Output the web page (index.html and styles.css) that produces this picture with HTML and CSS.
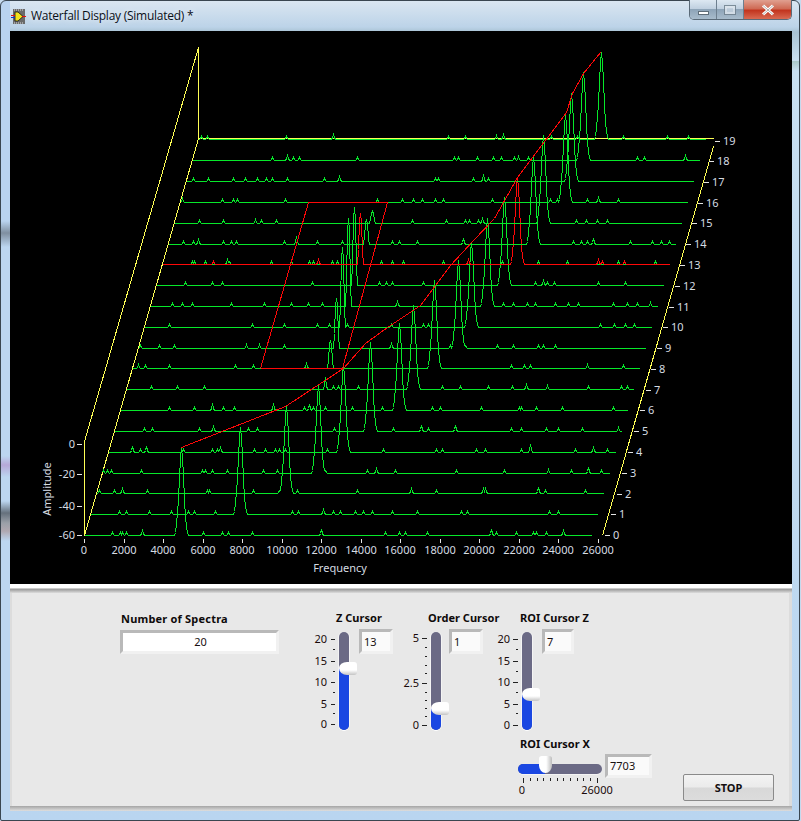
FILE: index.html
```html
<!DOCTYPE html>
<html lang="en">
<head>
<meta charset="utf-8">
<title>Waterfall Display (Simulated) *</title>
<link rel="stylesheet" href="styles.css">
</head>
<body>
<div class="window">
  <header class="titlebar">
    <svg class="app-icon" width="15" height="15" viewBox="0 0 15 15">
      <rect x="2" y="0" width="12" height="15" fill="#6a6a6a"/>
      <path d="M3 1h1M5 1h1M7 1h1M9 1h1M11 1h1M3 14h1M5 14h1M7 14h1M9 14h1M11 14h1" stroke="#ddd" fill="none"/>
      <path d="M4 3h3l5 4.500-5 4.500H4z" fill="#f2e21c" stroke="#111" stroke-width=".8"/>
      <path d="M0 6.500h4M11 7.500h4" stroke="#e01010" fill="none"/>
      <path d="M0 8.500h4" stroke="#1030d0" fill="none"/>
    </svg>
    <span class="title">Waterfall Display (Simulated) *</span>
    <div class="caption-buttons">
      <div class="cap cap-min"><span class="glyph-min"></span></div>
      <div class="cap cap-max"><span class="glyph-max"></span></div>
      <div class="cap cap-close">
        <svg width="16" height="12" viewBox="0 0 16 12"><path d="M3 1.500l10 9M13 1.500l-10 9" stroke="#fff" stroke-width="3" fill="none"/><path d="M3 1.500l10 9M13 1.500l-10 9" stroke="#666" stroke-width=".5" fill="none"/></svg>
      </div>
    </div>
  </header>

  <svg id="plot" class="plot" width="782" height="553" viewBox="10 31 782 553"></svg>

  <div class="panel-frame">
    <section class="panel">
      <div class="ctl ctl-spectra">
        <div class="label label-spectra">Number of Spectra</div>
        <div class="num num-wide">20</div>
      </div>

      <div class="ctl ctl-z">
        <div class="label label-v">Z Cursor</div>
        <div class="vrow">
          <svg class="scale" width="30" height="110">
            <text x="22" y="18">20</text><text x="22" y="40">15</text><text x="22" y="61">10</text><text x="22" y="83">5</text><text x="22" y="103">0</text>
            <path d="M26 14.500h4M26 36.500h4M26 57.500h4M26 79.500h4M26 99.500h4M28 24.500h2M28 46.500h2M28 67.500h2M28 88.500h2"/>
          </svg>
          <div class="track"><div class="fill fill-z"></div><div class="thumb thumb-z"></div></div>
          <div class="num num-z">13</div>
        </div>
      </div>

      <div class="ctl ctl-order">
        <div class="label label-v">Order Cursor</div>
        <div class="vrow">
          <svg class="scale" width="30" height="110">
            <text x="22" y="17">5</text><text x="22" y="62">2.5</text><text x="22" y="104">0</text>
            <path d="M25 13.500h5M25 58.500h5M25 100.500h5M28 22.500h2M28 31.500h2M28 40.500h2M28 48.500h2M28 67.500h2M28 75.500h2M28 83.500h2M28 91.500h2"/>
          </svg>
          <div class="track"><div class="fill fill-order"></div><div class="thumb thumb-order"></div></div>
          <div class="num num-order">1</div>
        </div>
      </div>

      <div class="ctl ctl-roiz">
        <div class="label label-roi">ROI Cursor Z</div>
        <div class="vrow">
          <svg class="scale" width="30" height="110">
            <text x="22" y="18">20</text><text x="22" y="40">15</text><text x="22" y="61">10</text><text x="22" y="83">5</text><text x="22" y="104">0</text>
            <path d="M25 14.500h5M25 36.500h5M25 57.500h5M25 79.500h5M25 100.500h5M28 24.500h2M28 46.500h2M28 67.500h2M28 88.500h2"/>
          </svg>
          <div class="track"><div class="fill fill-roiz"></div><div class="thumb thumb-roiz"></div></div>
          <div class="num num-roiz">7</div>
        </div>
      </div>

      <div class="ctl ctl-roix">
        <div class="label label-x">ROI Cursor X</div>
        <div class="hrow">
          <div class="hcol">
            <div class="htrack"><div class="hfill"></div><div class="hthumb"></div></div>
            <svg class="scale hscale" width="100" height="18">
              <path d="M5.500 0v5M79.500 0v5M12.500 0v3M19.500 0v3M25.500 0v3M32.500 0v3M39.500 0v3M45.500 0v3M52.500 0v3M59.500 0v3M65.500 0v3M72.500 0v3"/>
              <text class="mid" x="4" y="16">0</text><text class="mid" x="79" y="16">26000</text>
            </svg>
          </div>
          <div class="num num-x">7703</div>
        </div>
      </div>

      <button class="stop">STOP</button>
    </section>
  </div>
</div>
<script src="chart.js"></script>
</body>
</html>
```
FILE: styles.css
```css
* { box-sizing: border-box; }
html, body { margin: 0; padding: 0; background: #c5daee; }
body { width: 801px; height: 821px; overflow: hidden; font-family: "Noto Sans", "Liberation Sans", sans-serif; }

.window {
  width: 800px; height: 821px;
  display: flex; flex-direction: column;
  padding: 0 8px 0 9px;
  border: 1px solid #3a4650;
  border-radius: 6px 6px 2px 2px;
  background:
    linear-gradient(#b9d3ef 0, #b9d3ef 220px, #7f8fa0 232px, #bcd6f0 246px, #bcd6f0 455px, #b6a8d8 464px, #bcd6f0 476px, #bcd6f0 500px, #65707c 512px, #9aa0a8 522px, #b0a8b0 530px, #bcd6f0 540px) left top / 9px 100% no-repeat,
    linear-gradient(#dae6f1 0, #bcd3e8 26px, #a9c3d4 31px, #c9dff0 60px, #a9c8c8 58px, #c9e0f2 70px, #b9d5f0 100%);
}

.titlebar { height: 30px; flex: none; display: flex; align-items: flex-start; position: relative; }
.app-icon { margin: 8px 0 0 1px; }
.title {
  margin: 6px 0 0 5px;
  font: 12px/17px "Open Sans", "Noto Sans", sans-serif;
  letter-spacing: -.25px;
  color: #0a0f18;
  text-shadow: 0 0 6px rgba(255,255,255,.9);
}
.caption-buttons {
  position: absolute; right: -1px; top: -1px;
  display: flex; height: 20px;
  border: 1px solid #5a6a78; border-top: 0;
  border-radius: 0 0 5px 5px; overflow: hidden;
}
.cap { height: 100%; display: flex; align-items: center; justify-content: center; }
.cap-min, .cap-max { width: 27px; background: linear-gradient(#dde8f2 0, #c0d0e0 45%, #8ea4b8 50%, #a8bccc 100%); border-right: 1px solid #6d7f8f; }
.cap-close { width: 47px; background: linear-gradient(#e0a090 0, #cf6b55 45%, #c2351f 55%, #d96a52 100%); }
.glyph-min { width: 11px; height: 4px; margin-top: 6px; background: #fff; border: 1px solid #5f6d78; }
.glyph-max { width: 12px; height: 10px; border: 1px solid #6f7f8c; background: #c4d2de; box-shadow: inset 0 0 0 2px #dde6ee; opacity: .85; }

.plot { display: block; flex: none; background: #000; margin-left: 0; }
.plot polyline, .plot path.line { fill: none; shape-rendering: crispEdges; stroke-width: 1; }
.plot .green { stroke: #06e82a; }
.plot .red { stroke: #ff0808; }
.plot .yellow { stroke: #ffff55; }
.plot .tick { stroke: #e4e4e4; fill: none; shape-rendering: crispEdges; }
.plot text { font: 11px "Noto Sans", sans-serif; fill: #d6dce2; }

.panel-frame {
  flex: none; width: 782px; height: 227px;
  background: linear-gradient(#fff 0, #fff 4px, #979797 5px, #dcdcdc 9px);
  padding: 9px 3px 5px 2px;
  position: relative;
}
.panel-frame::after {
  content: ""; position: absolute; left: 0; right: 0; bottom: 0; height: 5px;
  background: linear-gradient(#a5a5a5, #dedede);
}
.panel { position: relative; width: 100%; height: 213px; background: #e8e8e8; }

.ctl { position: absolute; }
.ctl-spectra { left: 109px; top: 19px; }
.ctl-z { left: 293px; top: 18px; }
.ctl-order { left: 385px; top: 18px; }
.ctl-roiz { left: 476px; top: 18px; }
.ctl-roix { left: 506px; top: 144px; }

.label { font: 700 11px/14px "Noto Sans", sans-serif; color: #0e0a0a; white-space: nowrap; letter-spacing: .02px; }
.label-spectra { letter-spacing: .2px; }
.label-v { margin-left: 31px; }
.label-roi { margin-left: 32px; }
.label-x { margin-left: 2px; }

.num {
  border: 3px solid; border-color: #b9b9b9 #f1f1f1 #f1f1f1 #b9b9b9;
  background: #fafafa;
  font: 11px/18px "Noto Sans", sans-serif; color: #181010;
  padding-left: 2px; height: 25px;
  display: flex; align-items: center;
}
.num-wide { width: 159px; height: 24px; margin-top: 4px; margin-left: -1px; background: #fff; justify-content: center; }
.num-z, .num-order, .num-roiz { margin-top: 4px; }
.num-z { width: 34px; margin-left: 10px; }
.num-order { width: 34px; margin-left: 8px; }
.num-roiz { width: 32px; margin-left: 10px; }
.num-x { width: 47px; height: 24px; margin-top: 3px; margin-left: 3px; }

.vrow { display: flex; align-items: flex-start; }
.scale { display: block; overflow: visible; }
.scale text { font: 11px "Noto Sans", sans-serif; fill: #1a0a0a; text-anchor: end; }
.scale text.mid { text-anchor: middle; }
.scale path { stroke: #222; fill: none; shape-rendering: crispEdges; }

.track {
  position: relative; width: 10px; height: 98px; margin: 7px 0 0 4px;
  background: #6b6a85; border-radius: 5px;
  box-shadow: 0 1px 0 #fff, 1px 0 0 #f4f4f4, -1px 0 0 #f4f4f4;
}
.fill { position: absolute; left: 0; right: 0; bottom: 0; background: #1a47e2; border-radius: 0 0 5px 5px; }
.fill-z { height: 62px; }
.fill-order { height: 22px; }
.fill-roiz { height: 36px; }
.thumb {
  position: absolute; left: 0; width: 18px; height: 13px;
  background: linear-gradient(#fff 0, #fff 62%, #c4c4c4 100%);
  border-radius: 8px 3px 3px 8px / 6px 3px 3px 7px;
}
.thumb-z { top: 30px; }
.thumb-order { top: 70px; }
.thumb-roiz { top: 56px; }

.hrow { display: flex; align-items: flex-start; }
.hcol { width: 84px; padding-top: 13px; }
.htrack { position: relative; height: 10px; background: #6b6a85; border-radius: 5px; box-shadow: 0 1px 0 #f4f4f4; }
.hfill { position: absolute; left: 0; top: 0; bottom: 0; width: 27px; background: #1a47e2; border-radius: 5px 0 0 5px; }
.hthumb {
  position: absolute; left: 21px; top: -8px; width: 13px; height: 17px;
  background: linear-gradient(90deg, #fff 0, #fff 55%, #bcbcbc 100%);
  border-radius: 3px 3px 7px 7px / 3px 3px 8px 8px;
}
.hscale { margin-top: 4px; }

.stop {
  position: absolute; left: 671px; top: 181px; width: 91px; height: 27px;
  border: 1px solid #8a8a8a; border-radius: 2px;
  background: linear-gradient(#f3f3f3 0, #ebebeb 48%, #d8d8d8 52%, #dcdcdc 100%);
  font: 700 11px "Noto Sans", sans-serif; color: #141010; padding: 0;
}
```
FILE: chart.js
```js
(function () {
  var base = [535,514,493,473,452,431,410,389,368,348,327,306,285,264,244,223,202,181,160,139];
  // Small peaks per spectrum: "x" or "x:height"; m = main order peak [x, height]; r = ROI peak [x, height]
  var rows = [
    { p: "112 120 122 126 142:5 203 222 228 252 321:6 385 399 405 427 491:6 496 516 533 536 546 563:5", m: [181,88] },
    { p: "119 126 149 171 188 194 215 292 298 323:5 333 340 355 363 372 392 417 461 467 549 558", m: [240,87] },
    { p: "99 114 122:5 147 207 209 253 279 297 357 411:5 436 483:5 485:5 538:6 545 585", m: [286,87] },
    { p: "103 107 111 141 202 205 212 227 263 277 325 367 376:5 395 456 504 548:4 571 588:6 601", m: [318,88] },
    { p: "132:6 140 146:6 183 212 217 220:5 254 265 275 279 285 327 383 436 442 476 485 521 530:8 575 593:5 607", m: [343,87] },
    { p: "144 152 199 213:5 248 257 334 393 421:6 428 455:6 511 521 546 558 582 618:4", m: [370,89] },
    { p: "169 194 212:7 223 234 273:7 304 309:6 313 325 352 382 432 440 481 519 521 536 562 613", m: [399,87] },
    { p: "151 177 204 325:12 333 338 358 442 460 488 512 526:5 547:4 588 621 627", m: [413,84] },
    { p: "138:4 145 169 235 253 306:5 511 524 530 587:4 623", m: [434,88], r: [330,28] },
    { p: "140 159 174 246:4 259:4 284 391:5 450 465 497 513 538 543 555", m: [458,88], r: [336,50] },
    { p: "169 252 284 317 329 347 391 423 428 600 614 625 634", m: [471,85], r: [342,80] },
    { p: "172 182 192 231 264 291 308 322 397:5 503 513 527 535 555 568 578 613 627 637 650:4", m: [487,88], r: [348,88] },
    { p: "185 212 222 312 379 386 392 423 535 543:5 547 554 598 625", m: [504,88], r: [354,78] },
    { p: "192 194 205 227:5 229 271 291 309 313 332 337 381 392 403 443 502 538 567 618 655", red: "213 318:5 468:5 598:5 602 624", m: [517,87], r: [360,51] },
    { p: "183 193 198:5 223 231 236 284 296:8 317 342 392 399 417 463:6 573 581 587 593:6 630 652 661 669", m: [533,88], r: [366,25] },
    { p: "199 223 255:4 261 276 412 446 465 469 478 482:5 576 586 597 607", m: [543,88], r: [372,12] },
    { p: "182:4 222 233 237 285 377 402 413 422 443 492 435 550 557 560 587 598:5 618", m: [565,88] },
    { p: "193 208 233 245 257 266 272 287 324 339:5 435 438 473 483:7 488", m: [571,88] },
    { p: "272 287:5 293 299 357 454 458 477 493 501 514 518:4 528 637 644 685:5", m: [583,88] },
    { p: "201 207:3 286 333:5 448 465 496:4 503:5 551 577 623 667 688", m: [601,87] }
  ];
  var WIDE = [0,.03,.14,.25,.42,.65,.88,1,.88,.68,.4,.2,.1,.03,0];
  var NARROW = [0,.3,.85,1,.85,.25,0];

  function stamp(h, x, height, profile) {
    var c = (profile.length - 1) / 2;
    profile.forEach(function (f, i) {
      var k = x + i - c;
      if (f * height > (h[k] || 0)) h[k] = f * height;
    });
  }
  function small(h, list) {
    (list || "").split(" ").forEach(function (s) {
      if (!s) return;
      var a = s.split(":"), x = +a[0], v = a[1] ? +a[1] : 3;
      stamp(h, x, v, [.35, 1, .35]);
    });
  }
  function trace(i, h, cls) {
    var x0 = 84 + 6 * i, x1 = 591 + 6 * i, pts = [];
    for (var x = x0; x <= x1; x++) {
      pts.push((x + .5) + "," + (base[i] - Math.round(h[x] || 0) + .5));
    }
    return '<polyline class="' + cls + '" points="' + pts.join(" ") + '"/>';
  }
  function line(cls, pts) {
    return '<polyline class="' + cls + '" points="' + pts + '"/>';
  }

  var out = "";
  // yellow frame
  out += line("yellow", "84.5,535.5 84.5,441.5 198.5,47.5 198.5,138.5 713.5,138.5");
  out += line("yellow", "84.5,535.5 198.5,138.5");
  out += line("yellow", "602.5,535.5 713.5,146.5");

  rows.forEach(function (r, i) {
    var h = {};
    small(h, r.p);
    stamp(h, r.m[0], r.m[1], WIDE);
    if (r.r) stamp(h, r.r[0], r.r[1], NARROW);
    if (r.red) {
      out += trace(i, h, "green");
      var rh = {};
      small(rh, r.red);
      stamp(rh, r.m[0], r.m[1], WIDE);
      stamp(rh, r.r[0], r.r[1], NARROW);
      out += trace(i, rh, "red");
    } else {
      out += trace(i, h, "green");
    }
  });

  // ROI box and order cursor
  out += line("red", "260.5,368.5 342.5,368.5 387.5,202.5 308.5,202.5 260.5,368.5");
  out += line("red", "181.5,447.5 285.5,406.5 320.5,383.5 343.5,368.5 365.5,343.5 387.5,327.5 420.5,305.5 435.5,285.5 450.5,265.5 473.5,240.5 494.5,218.5 517.5,177.5 566.5,112.5 572.5,93.5 583.5,73.5 600.5,52.5");

  // axes
  var t = "", txt = "";
  var lab = [535,514,494,473,452,431,410,390,369,348,327,307,286,265,244,223,203,182,161,141];
  lab.forEach(function (y, i) {
    var x = 605 + i * 5.8;
    t += "M" + Math.round(x) + " " + (y + .5) + "h5";
    txt += '<text x="' + Math.round(x + 8) + '" y="' + (y + 4) + '">' + i + "</text>";
  });
  [[0,444],[-20,474],[-40,506],[-60,535]].forEach(function (a) {
    t += "M77 " + (a[1] + .5) + "h5";
    txt += '<text text-anchor="end" x="75" y="' + (a[1] + 4) + '">' + a[0] + "</text>";
  });
  for (var k = 0; k <= 13; k++) {
    var fx = Math.round(84 + 39.5 * k);
    t += "M" + (fx + .5) + " 539v4";
    txt += '<text text-anchor="middle" x="' + fx + '" y="554">' + (k * 2000) + "</text>";
  }
  out += '<path class="tick" d="' + t + '"/>' + txt;
  out += '<text text-anchor="middle" x="340" y="572">Frequency</text>';
  out += '<text text-anchor="middle" transform="translate(51 489) rotate(-90)">Amplitude</text>';

  document.getElementById("plot").innerHTML = out;
})();
```
